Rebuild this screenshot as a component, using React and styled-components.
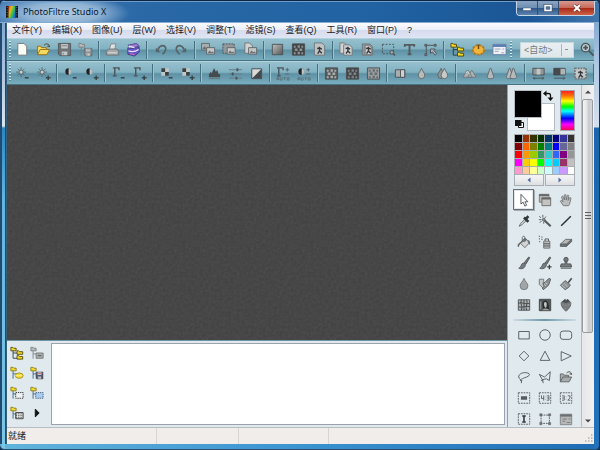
import React from "react";
import styled, { createGlobalStyle, css } from "styled-components";

const uiFont = `"Liberation Sans", "Noto Sans CJK SC", sans-serif`;

const GlobalStyle = createGlobalStyle`
  *, *::before, *::after { box-sizing: border-box; }
  html, body { margin: 0; padding: 0; }
  body { font-family: ${uiFont}; font-size: 9px; color: #1c1c24; background: #16304f; }
  button { font: inherit; color: inherit; padding: 0; margin: 0; border: 0; background: none; }
`;

/* ---------- window ---------- */

const Frame = styled.div`
  height: 100vh;
  min-height: 300px;
  display: flex;
  flex-direction: column;
  overflow: hidden;
  padding: 0 5px 5px 6px;
  border-radius: 6px 6px 5px 5px;
  border-right: 1px solid #12335c;
  border-bottom: 1px solid #2c4f6c;
  background:
    linear-gradient(#6f9cc8, #b4cbe4 70px, #d5e0ee 127px, #1b66ac 128px, #2273bb) right 0 top 0 / 5px 100% no-repeat,
    linear-gradient(#6f9cc8, #a9c3de 70px, #dbe5ef 126px, #2b86c4 128px, #62b5de 200px, #7cc6e6) 2px 0 / 3px 100% no-repeat,
    linear-gradient(90deg, #62b4dc, #3b93d0 50%, #1e6cb4) 0 100% / 100% 5px no-repeat,
    #214a70;
`;

const TitleBar = styled.header`
  flex: 0 0 23px;
  display: flex;
  align-items: flex-start;
  margin: 0 -5px 0 -6px;
  padding: 0 4px 0 6px;
  border-top: 1px solid #0d2644;
  box-shadow: inset 0 1px 0 #6e9cc9, inset 0 -1px 0 #85abd0;
  background:
    radial-gradient(ellipse 68px 18px at 62px 12px, #b0cbe2 0%, #8fb3d4 55%, transparent 100%),
    linear-gradient(90deg, #4f83b8 0, #2a68a6 140px, #2163a3 60%, #1b5696 88%, #4176ab 100%);
`;

const Title = styled.h1`
  margin: 0;
  flex: 1;
  padding: 4px 0 0 5px;
  font: 400 9px/14px "Noto Sans", "Open Sans", sans-serif;
  color: #0b1a2e;
`;

const AppLogo = styled.svg`
  width: 12px;
  height: 12px;
  margin-top: 5px;
`;

const Captions = styled.div`
  display: flex;
  height: 15px;
  border: 1px solid #c9d6e6;
  border-top: 0;
  border-radius: 0 0 4px 4px;
  overflow: hidden;
`;

const CaptionButton = styled.button`
  width: ${(p) => (p.$close ? 35 : 21)}px;
  display: grid;
  place-items: center;
  border-right: 1px solid #35506f;
  background: linear-gradient(#8ba5c3, #6d8db2 48%, #2f5788 52%, #5b84b0);
  ${(p) =>
    p.$close &&
    css`
      border-right: 0;
      background: linear-gradient(#d79a8f, #c76a5a 48%, #a82a18 52%, #cc6247);
    `}
`;

const Client = styled.div`
  flex: 1;
  min-height: 0;
  display: flex;
  flex-direction: column;
  border-left: 1px solid #35617f;
  background: #e0e9ed;
`;

/* ---------- menu ---------- */

const MenuBar = styled.nav`
  flex: 0 0 15px;
  display: flex;
  background: linear-gradient(#fbfcfe, #eceef8 45%, #d6dbee 50%, #e0e5f5);
`;

const MenuItem = styled.button`
  padding: 0 5px;
  line-height: 15px;
  white-space: nowrap;
`;

/* ---------- toolbars ---------- */

const ToolBar = styled.div`
  flex: 0 0 ${(p) => p.$height}px;
  display: flex;
  align-items: center;
  overflow: hidden;
  padding-left: 2px;
  border-top: 1px solid #b3d2dc;
  border-bottom: 1px solid #477384;
  background: linear-gradient(#96c0ce, #82b2c2 46%, #5e91a4 54%, #79aebf);
`;

const Grip = styled.span`
  flex: 0 0 2px;
  height: 18px;
  margin-right: 1px;
  background: repeating-linear-gradient(#d5e8ef 0 1px, #55899d 1px 2px, transparent 2px 3px);
`;

const Divider = styled.span`
  flex: 0 0 6px;
  height: 18px;
  background: linear-gradient(90deg, transparent 2px, #47707f 2px 3px, #9cc3d0 3px 4px, transparent 4px);
`;

const ToolButton = styled.button`
  flex: 0 0 21px;
  height: 20px;
  display: flex;
  align-items: center;
  padding-left: 3px;
`;

const ZoomSelect = styled.select`
  flex: 0 0 54px;
  width: 54px;
  height: 16px;
  margin: 0 3px 0 7px;
  padding: 0 3px;
  appearance: none;
  border: 1px solid #c6d6dd;
  border-radius: 0;
  font: 9px ${uiFont};
  color: #737b80;
  opacity: 1;
  background:
    linear-gradient(#8a8f94, #8a8f94) right 5px center / 3px 1px no-repeat,
    linear-gradient(#aab6bd, #aab6bd) right 11px center / 1px 12px no-repeat,
    linear-gradient(#e9eef1, #dfe7eb);
`;

/* ---------- work area ---------- */

const Body = styled.div`
  flex: 1;
  min-height: 0;
  display: flex;
`;

const Column = styled.div`
  flex: 1;
  min-width: 0;
  display: flex;
  flex-direction: column;
`;

const grain = `url("data:image/svg+xml,%3Csvg xmlns='http://www.w3.org/2000/svg' width='128' height='128'%3E%3Cfilter id='g'%3E%3CfeTurbulence type='fractalNoise' baseFrequency='.35' numOctaves='2' stitchTiles='stitch'/%3E%3CfeColorMatrix type='saturate' values='0'/%3E%3C/filter%3E%3Crect width='128' height='128' filter='url(%23g)' opacity='.1'/%3E%3C/svg%3E")`;

const Canvas = styled.main`
  flex: 1;
  min-height: 0;
  background: ${grain} #404040;
`;

const LayerDock = styled.section`
  flex: 0 0 87px;
  display: flex;
  gap: 4px;
  padding: 2px 2px 2px 0;
  border-top: 1px solid #6d94a3;
  background: #e0e9ed;
`;

const LayerActions = styled.div`
  flex: 0 0 40px;
  display: grid;
  grid-template-columns: 20px 20px;
  grid-auto-rows: 20px;
`;

const SmallButton = styled.button`
  display: grid;
  place-items: center;
`;

const LayerList = styled.div`
  flex: 1;
  border: 1px solid #9aa3ad;
  background: #fff;
`;

/* ---------- side panel ---------- */

const Side = styled.aside`
  flex: 0 0 87px;
  display: flex;
  border-left: 1px solid #86a5b1;
  background: #e0e9ed;
  overflow: hidden;
`;

const SideContent = styled.div`
  flex: 1;
  min-width: 0;
  padding: 5px 6px 0;
  overflow: hidden;
`;

const ColorRow = styled.div`
  display: flex;
  justify-content: space-between;
  height: 41px;
`;

const Swatches = styled.div`
  position: relative;
  width: 42px;
`;

const Swatch = styled.button`
  position: absolute;
  width: 28px;
  height: 28px;
  border: 1px solid #b3bcc2;
  ${(p) => (p.$front ? "left: 0; top: 0; background: #000; z-index: 1;" : "left: 13px; top: 13px; background: #fff;")}
`;

const CornerButton = styled.button`
  position: absolute;
  display: grid;
  ${(p) => (p.$swap ? "left: 29px; top: 0;" : "left: 1px; top: 29px;")}
`;

const Hue = styled.div`
  width: 15px;
  border: 1px solid #a9a5ac;
  background: linear-gradient(#f22, #ff8000 14%, #ff0 26%, #0f0 40%, #0ff 52%, #00f 70%, #f0f 86%, #f05);
`;

const Palette = styled.div`
  display: grid;
  grid-template-columns: repeat(8, 1fr);
  grid-auto-rows: 7px;
  gap: 1px 0;
  padding: 1px 0 0 1px;
  margin-top: 3px;
  background: #a9adb0;
`;

const Cell = styled.button`
  background: ${(p) => p.$color};
  border-right: 1px solid #a9adb0;
`;

const Pager = styled.div`
  display: grid;
  grid-template-columns: 1fr 1fr;
  gap: 1px;
`;

const PagerButton = styled.button`
  height: 12px;
  display: grid;
  place-items: center;
  border: 1px solid #a8b0b6;
  background: linear-gradient(#f4f4f5, #ebecee 50%, #dcdee1);
`;

const ToolGrid = styled.div`
  display: grid;
  grid-template-columns: repeat(3, 21px);
  grid-auto-rows: 21px;
  margin: ${(p) => (p.$tight ? 0 : 3)}px 0 0 -1px;
`;

const GridButton = styled.button`
  display: grid;
  place-items: center;
  border: 1px solid transparent;
  ${(p) =>
    p.$active &&
    css`
      background: #fff;
      border-color: #66707a;
      box-shadow: inset 0 0 0 1px #e3e6e8, 1px 1px 0 #a3abb0;
    `}
`;

const Rule = styled.hr`
  height: 2px;
  margin: 4px -1px 3px;
  border: 0;
  background: linear-gradient(90deg, #d0dde2, #6e98a8 50%, #d0dde2);
`;

const ScrollBar = styled.div`
  flex: 0 0 13px;
  display: flex;
  flex-direction: column;
  background: linear-gradient(90deg, #b8bdc2 0 1px, #e6e6e8 1px, #f1f1f2);
`;

const ScrollArrow = styled.button`
  flex: 0 0 13px;
  display: grid;
  place-items: center;
`;

const Track = styled.div`
  flex: 1;
  min-height: 0;
`;

const Thumb = styled.div`
  height: 74%;
  margin: 1px 1px 0 1px;
  display: grid;
  place-items: center;
  border: 1px solid #979a9e;
  border-radius: 2px;
  background: linear-gradient(90deg, #f6f6f6, #e3e3e5 45%, #c9cbce 60%, #d4d5d8);
`;

const Status = styled.footer`
  flex: 0 0 17px;
  display: flex;
  border-top: 1px solid #b7bdc2;
  line-height: 16px;
  background: #f0edeb;
`;

const StatusCell = styled.div`
  width: ${(p) => p.$width}px;
  padding-left: 1px;
  border-right: 1px solid #d8d6d4;
`;

const StatusRest = styled.div`
  flex: 1;
  display: flex;
  justify-content: flex-end;
  align-items: flex-end;
`;

/* ---------- icons, all drawn on a 16 unit grid ---------- */

const Svg = styled.svg`
  display: block;
  width: ${(p) => p.$size || 16}px;
  height: ${(p) => p.$size || 16}px;
  fill: none;
  stroke: #4d5357;
`;

const Minus = () => <path d="M10.500 12.500h4" stroke="#3c4448" strokeWidth="1.500" />;
const Plus = () => <path d="M10.500 12.500h5M13 10v5" stroke="#3c4448" strokeWidth="1.500" />;
const Sun = () => (
  <>
    <circle cx="6.500" cy="6.500" r="2.300" fill="#c6cdd0" />
    <path d="M6.500 1.500v1.500M6.500 10v1.500M1.500 6.500h1.500M10 6.500h1.500M3 3l1 1M9 9l1 1M3 10l1-1M9 4l1-1" />
  </>
);
const Half = ({ x = 6 }) => (
  <>
    <circle cx={x} cy="6" r="3.200" fill="#b9c6cb" stroke="#8fa3ab" />
    <path d={`M${x} 2.500a3.500 3.500 0 0 0 0 7z`} fill="#222" stroke="none" />
  </>
);
const Gamma = ({ x = 0 }) => (
  <path d={`M${x + 2} 2h6.500v2.500M${x + 4} 2v8.500M${x + 2} 10.500h4`} stroke="#4b5559" strokeWidth="1.500" />
);
const Checks = () => (
  <>
    <path d="M2.500 2.500h8v8h-8z" fill="#c2c8ca" stroke="none" />
    <path d="M2.500 2.500h4v4h4v4h-4v-4h-4z" fill="#3a3f42" stroke="none" />
  </>
);
const Auto = () => (
  <path
    d="M1 15v-2.500h2V15M1 14h2M4.500 12v3h2v-3M8 12.500h2.500M9.300 12.500V15M12 12.500h2V15h-2z"
    stroke="#596a72"
    strokeWidth=".8"
  />
);
const PlusMinus = () => <path d="M10 4h4M12 2v4M10 8.500h4" stroke="#596267" />;
const PhotoBox = ({ x, y, tone = "#c4c6c6" }) => (
  <>
    <path d={`M${x} ${y}h8.500v7h-8.500z`} fill={tone} stroke="#62686b" />
    <path d={`M${x + 1} ${y + 6}l2-3 2 2 1.500-1 1.500 2z`} fill="#6b7072" stroke="none" />
  </>
);
const Film = ({ a, b }) => (
  <>
    <path d="M1.500 2h13v12h-13z" fill={a} stroke="#4c5052" />
    <path d="M3 4h2v2H3zM7 3.500h2.500V6H7zM11 4h2v2h-2zM4 7h3v2.500H4zM9 7h3v2.500H9zM3 11h2v2H3zM7 10.500h2.500V13H7zM11 11h2v2h-2z" fill={b} stroke="none" />
  </>
);
const Page = ({ x = 3, y = 1.5, w = 9.5, h = 12.5, fill = "#d1d3d2" }) => (
  <path d={`M${x} ${y}h${w - 3}l3 3v${h - 3}h-${w}z`} fill={fill} stroke="#70787b" />
);
const Man = ({ x = 0 }) => (
  <path d={`M${x + 8} 5v1M${x + 5.500} 7l2.500-.500 2.500 1M${x + 8} 7v2.500l-2 3M${x + 8} 9.500l2.500 2.500`} stroke="#34383a" strokeWidth="1.500" />
);
const Drop = ({ x = 8, fill = "#b7bbbc" }) => (
  <path d={`M${x} 2.500c-1 3-3.500 5-3.500 7.500a3.500 3.500 0 0 0 7 0c0-2.500-2.500-4.500-3.500-7.500z`} fill={fill} stroke="#60676a" />
);
const Cone = ({ x = 8 }) => (
  <path d={`M${x - .5} 2.500h1l3 9c0 1.500-1.500 2-3.500 2s-3.500-.500-3.500-2z`} fill="#b5b9ba" stroke="#62696c" />
);
const Disk = ({ x = 1, y = 1, s = 1, color = "#6e7376" }) => (
  <g transform={`translate(${x} ${y}) scale(${s})`}>
    <path d="M.500.500h13v13H2l-1.500-1.500z" fill={color} stroke="#565b5e" />
    <path d="M3.500 1h7v5h-7zM4 9h6v4H4z" fill="#c4c8c9" stroke="none" />
    <path d="M4.500 3h5M5.500 10.500v2" stroke="#777" />
  </g>
);
const Tree = ({ gray }) => (
  <>
    <path d="M3.500 5v9.500M3.500 9h4" stroke={gray ? "#7f8486" : "#3c6384"} />
    <path d="M1 1.500h2.500l1 1H7v3H1z" fill={gray ? "#b5b9ba" : "#f5dc24"} stroke={gray ? "#7c8183" : "#8a7a17"} />
  </>
);
const Dashed = ({ fill = "none" }) => (
  <path d="M1.500 2h13v12h-13z" strokeDasharray="2 1" fill={fill} stroke="#50565a" />
);
const Folder = ({ fill = "#f6d95f", line = "#92701a" }) => (
  <>
    <path d="M1.500 13.500V4.500h3.500l1 1.500h5v2.500" fill={fill} stroke={line} />
    <path d="M1.500 13.500l3-5.500h10l-3 5.500z" fill={fill} stroke={line} />
    <path d="M8.500 3.500c2-2 4-2 5.500 0v2M12 4.500h3" stroke="#4f4b39" />
  </>
);
const Brush = () => (
  <>
    <path d="M13.500 1L8 8l2 1.500L14.500 2z" fill="#777" stroke="#4d5154" />
    <path d="M7.500 8c-3 0-2 4.500-5.500 6 3 1.500 7.500 0 7.500-4z" fill="#777c7e" stroke="#54595b" />
  </>
);

const icons = {
  newFile: <Page fill="#fdfdf8" />,
  open: <Folder />,
  save: <Disk />,
  saveTree: (<><Tree gray /><Disk x={6.500} y={6.500} s={0.620} color="#888d8f" /></>),
  print: (<><path d="M4.500 8l2-6h5l-1 6" fill="#e0e2e1" stroke="#83898b" /><path d="M1.500 10l2.500-2.500h9l1.500 2.500v4h-13z" fill="#a5a9aa" stroke="#6d7375" /><path d="M3 11.500h10" stroke="#e1e3e3" /></>),
  scanner: (<><path d="M2 3.500l9-2 3 2.500-7 3z" fill="#9b7bd0" stroke="#514695" /><path d="M2 6c2 1.500 8 1.500 12-1v6l-5 4-7-2z" fill="#6358c8" stroke="#433b8a" /><path d="M2.500 9.500c4 1.500 8 .500 11-1.500M3 4.500l6 1.500" stroke="#f0dcf8" strokeWidth="1.500" /><path d="M4 12.500l5 1" stroke="#e26fa6" /></>),
  undo: (<><path d="M3 6v5h5z" fill="#59646a" stroke="none" /><path d="M5 8.500c2.500-6 7.500-5.500 8.500-2 .500 3-1 4.500-3.500 6.500" stroke="#59646a" strokeWidth="1.800" /></>),
  redo: (<><path d="M13 6v5H8z" fill="#59646a" stroke="none" /><path d="M11 8.500C8.500 2.500 3.500 3 2.500 6.500c-.500 3 1 4.500 3.500 6.500" stroke="#59646a" strokeWidth="1.800" /></>),
  copies: (<><PhotoBox x={0.500} y={1.500} tone="#a8acac" /><PhotoBox x={6} y={6} /></>),
  duplicate: (<><path d="M1 2h12v10H1z" fill="#93999a" strokeDasharray="2 1" /><PhotoBox x={5.500} y={6} /></>),
  pastePhoto: (<><Page x={2} y={1} w={8} h={11} /><PhotoBox x={6} y={6} /></>),
  grayscale: (<><defs><linearGradient id="gs" x2="1" y2="1"><stop stopColor="#bfc1c1" /><stop offset="1" stopColor="#555" /></linearGradient></defs><path d="M2.500 2.500h11v11h-11z" fill="url(#gs)" /></>),
  film: <Film a="#3f4345" b="#8d9293" />,
  manPage: (<><Page x={2.500} y={1} w={11} h={13} fill="#bfc3c3" /><Man /></>),
  manPages: (<><Page x={1} y={1} w={8} h={11} /><Page x={5} y={3} w={9} h={11} /><Man x={1.500} /></>),
  manDark: (<><Page x={2.500} y={2} w={11} h={12} fill="#90979a" /><Page x={5.500} y={3.500} w={7} h={10} /><Man x={1} /></>),
  selectZoom: (<><path d="M1.500 2.500h12v10h-12z" strokeDasharray="2 1.500" /><circle cx="11.500" cy="11" r="2" fill="#9ba3a6" /><path d="M13 12.500l2 2" strokeWidth="1.500" /></>),
  text: <path d="M3 5V3h10v2M8 3v10M6 13h4" stroke="#535b5f" strokeWidth="2" />,
  transform: (<><path d="M3.500 3.500v10M3.500 3.500h10" /><path d="M2 2.500h2v2H2zM12 2.500h2v2h-2zM2 12.500h2v2H2z" fill="#8c989d" /><path d="M8 7.500h5l-1.500 1.500 3 3.500-1.500 1.500-3-3.500L8 12z" fill="#b5b8b8" /></>),
  explorer: (<><path d="M3.500 5v9h5M3.500 8h5" stroke="#2a3b47" /><path d="M1 1.500h2l1 1h3v3H1zM8 5.500h2l1 1h3.500v3H8zM8 11h2l1 1h3.500v3H8z" fill="#f5d820" stroke="#50470f" /></>),
  gear: (<><ellipse cx="8" cy="8.500" rx="6" ry="5" fill="#e2a42b" stroke="#b1781e" strokeWidth="2" strokeDasharray="2.500 1.200" /><ellipse cx="8" cy="8.500" rx="5" ry="4" fill="#f0b53a" stroke="none" /><path d="M8 2.500v5" stroke="#734c12" strokeWidth="1.600" /></>),
  dialog: (<><path d="M1 2.500h14v11H1z" fill="#eef0f5" stroke="#6580a9" /><path d="M1 4h14" stroke="#5a7db5" strokeWidth="2.500" /><path d="M3 7.500h6M3 10h4M11 7.500h2M10 11.500h3" stroke="#98a5b8" /></>),
  zoomIn: (<><circle cx="6" cy="6" r="4.500" fill="#bccbd0" strokeWidth="1.500" /><path d="M3.500 6h5M6 3.500v5M9.500 9.500l5 5" strokeWidth="1.800" /></>),
  sunMinus: (<><Sun /><Minus /></>),
  sunPlus: (<><Sun /><Plus /></>),
  halfMinus: (<><Half /><Minus /></>),
  halfPlus: (<><Half /><Plus /></>),
  gammaMinus: (<><Gamma /><Minus /></>),
  gammaPlus: (<><Gamma /><Plus /></>),
  satMinus: (<><Checks /><Minus /></>),
  satPlus: (<><Checks /><Plus /></>),
  histogram: (<><path d="M2 12V9l2-3 1 2 2.500-6 2 4 1.500-2 1 4 2 1v3z" fill="#454c50" stroke="none" /><path d="M2 13.500h12" stroke="#6b7376" /></>),
  levels: (<><path d="M1 4h14M1 8.500h14M1 13h14" stroke="#667b84" /><path d="M10 2.500v3M5 7v3M9 11.500v3" strokeWidth="2" stroke="#4b5357" /></>),
  negative: (<><path d="M3 3h10.500v10.500H3z" fill="#45494b" /><path d="M3.500 13V3.500H13z" fill="#dadbd9" stroke="none" /></>),
  autoGamma: (<><Gamma x={-1} /><PlusMinus /><Auto /></>),
  autoContrast: (<><Half x={5} /><PlusMinus /><Auto /></>),
  filmA: <Film a="#565a5b" b="#a9adad" />,
  filmB: <Film a="#414547" b="#7d8385" />,
  filmC: <Film a="#999ea0" b="#686e70" />,
  splitBox: (<><path d="M2.500 4h10v8h-10z" fill="#a8adae" /><path d="M8 4h4.500v8H8z" fill="#d0d2d2" /></>),
  drop: <Drop />,
  drops: (<><Drop x={6.500} fill="#8e9496" /><Drop x={10} fill="#c9caca" /></>),
  hills: (<><path d="M1 12l4-7h2l4 7zM6 12l4-7h1l4 7z" fill="#adb2b3" stroke="#737b7e" /><path d="M4 7.500l2-2 2 3" stroke="#d9dbda" /></>),
  cone: <Cone />,
  cones: (<><Cone x={6} /><Cone x={10} /></>),
  gradOut: (<><path d="M2 2.500h12v7H2z" fill="#92989a" stroke="#4b5052" /><path d="M6 3h4v6H6z" fill="#c3c5c5" stroke="none" /><path d="M2 13h12M4 11.500L2.500 13 4 14.500M12 11.500l1.500 1.500-1.500 1.500" /></>),
  gradIn: (<><path d="M2 2.500h12v7H2z" fill="#454a4c" stroke="#43484a" /><path d="M9 3h5v6H9z" fill="#b0b4b5" stroke="none" /><path d="M2 13h12M12 11.500l1.500 1.500-1.500 1.500" /></>),
  frameMan: (<><path d="M2 2.500h12v11H2z" fill="#c4c8c8" stroke="#737a7c" strokeWidth="2" strokeDasharray="2 1" /><Man /></>),
  pointer: <path d="M4.500 1.500v11l2.500-2 2 4.500 2-1-2-4h3.500z" fill="#fff" stroke="#444a50" />,
  windows: (<><path d="M1.500 1.500h11v9h-11z" fill="#b3b5b4" stroke="#777" /><path d="M1.500 2.500h11" stroke="#666" strokeWidth="2" /><path d="M4.500 5.500h10v9h-10z" fill="#c3c4c2" stroke="#666" /><path d="M4.500 6.500h10" stroke="#666" strokeWidth="2" /></>),
  hand: (<><path d="M5 14.500L1.500 9.500c.500-1.500 2-1 3 .500L3 4.500c.500-1.500 1.700-1 2.200.5l1 3L6 2.500c.7-1.300 1.800-1 2 .5l.3 5 1-5c.8-1.200 2-.6 1.700.8l-.6 4.700 1.600-3c1-.8 2 0 1.500 1.300L12 13l-1 1.500z" fill="#bcbebd" stroke="#707476" /></>),
  dropper: (<><path d="M9.500 5.500L4 11l-1.500 3 3-1.500L11 7z" fill="#d6d8d7" stroke="#61676a" /><path d="M8 4l5 5M10 6l3-3.500" stroke="#303639" strokeWidth="3" /></>),
  wand: (<><path d="M7.500 7.500l7 6.500" stroke="#555a5c" strokeWidth="2.500" /><path d="M5.500 1v3M1.500 2.500l2 2M1 6.500h3M2 10l2-2M6.500 9v2M9 3l-1.500 2" /><circle cx="6.500" cy="6.500" r="1.500" fill="#999" /></>),
  line: <path d="M2.500 13.500l11-11" stroke="#33383b" strokeWidth="1.800" />,
  bucket: (<><path d="M3.500 9l5.500-5.500 5.500 5-5.500 6z" fill="#d2d4d3" stroke="#62676a" /><path d="M3.500 9L9 3.500l2 2L3 9.500c-2 .5-2 2-1.500 4z" fill="#777c7e" stroke="#62676a" /><path d="M6 7V2.500c1-1.500 2.500-1.500 3 0V8" stroke="#62676a" /><path d="M12 5.500c3 .5 3.500 3 2.500 6L12.500 9z" fill="#72777a" stroke="none" /></>),
  spray: (<><path d="M6.500 7h7v8h-7z" fill="#b9bbba" stroke="#696e70" /><path d="M8 7V4.500h4V7M6.500 10h7M6.500 12.500h7" /><path d="M1 1.500h1M4 2.500h1M1 4.500h1M4 5h1M1.500 7.500h1" strokeWidth="1.500" /></>),
  eraser: (<><path d="M1.500 10.500l6-5.500h7l-6 5.500z" fill="#b6b8b7" stroke="#5f6467" /><path d="M1.500 10.500h7v2.500h-7zM8.500 13l6-5.500V5l-6 5.500z" fill="#6d7274" stroke="#5f6467" /></>),
  brush: <Brush />,
  brushPlus: (<><Brush /><Plus /></>),
  stamp: (<><circle cx="8" cy="4" r="2.500" fill="#777" /><path d="M7 6h2v3h4.500l1 3.500h-13l1-3.500H7z" fill="#777c7e" /><path d="M2 14h12" /></>),
  water: <path d="M8 1.500c-1 3.500-4.500 5.500-4.500 8.700a4.500 4.300 0 0 0 9 0c0-3.200-3.500-5.200-4.500-8.700z" fill="#a1a5a7" stroke="#74797b" />,
  smudge: (<><path d="M1.500 2.500h5V8l2 2-3 2.500-4-4z" fill="#c3c6c6" stroke="#6b7072" /><path d="M12.500 1.500l2 1-2.500 7-3.500 3-2.500 2-1-2 2-2-1.500-3 2.500-1.500z" fill="#8c9092" stroke="#54595b" /><path d="M7 8.500l2 1.500M8.500 6.500l2 1.500" stroke="#d0d2d2" /></>),
  broom: (<><path d="M14.500 1.500l-4 5" strokeWidth="2" /><path d="M7 4l6 5-2 3-4 2.500-5.500-5z" fill="#8f9496" stroke="#5b6163" /><path d="M3 9l4 4M5.500 7l4 4" stroke="#c5c7c7" /></>),
  mesh: (<><path d="M1.500 2h13v12h-13z" fill="#acb0b0" /><path d="M5 2c-2 4 2 8 0 12M11 2c2 4-2 8 0 12M8 2v12M1.500 6c4-2 8 2 13 0M1.500 10c4 2 8-2 13 0" stroke="#3e4446" /></>),
  portrait: (<><path d="M1.500 1.500h13v13h-13z" fill="#54585a" stroke="#3e4244" /><path d="M5.500 12C4 4 6.500 2.500 9 3c3.500.5 3 6 4 10z" fill="#2c2f31" stroke="none" /><path d="M7 5.500c1-1.500 3-1 3 1.500S9.500 11 8.500 11 6.500 8 7 5.500z" fill="#c2c4c3" stroke="none" /><path d="M5 14c1-2.500 6-2.500 8 0z" fill="#9a9e9f" stroke="none" /><path d="M3 13V4" stroke="#8a8e8f" strokeWidth="1.500" /></>),
  berry: (<><path d="M2.500 5c-.500 4 2 7.500 5.500 10 3.500-2.500 6-6 5.500-10-2-2-9-2-11 0z" fill="#777b7c" stroke="#686d6f" /><path d="M4 4l3-2.500L8 3l2-1.500L12 4 8 5.500z" fill="#4a4f51" stroke="#4a4f51" /><path d="M5 7v1M8 8v1M11 7v1M7 11.500v1" stroke="#999" /></>),
  rect: <path d="M2 4h12v8.500H2z" />,
  ellipse: <circle cx="8" cy="8" r="6" />,
  roundRect: <rect x="1.500" y="3.500" width="13" height="9.500" rx="3" />,
  diamond: <path d="M8 2.500L13.500 8 8 13.500 2.500 8z" />,
  triangle: <path d="M8 2.500l5.500 10.500h-11z" />,
  triangleR: <path d="M2.500 3v10.500L14 8z" />,
  lasso: <path d="M4 11C-1 7 4 3 9 3c6 0 7 3 2 5-3 1-5 2-6 2.500M4 11c2 0 2 2 .500 1.500C2 11 6 11 5 15" />,
  polyLasso: <path d="M5 11L1.500 5l6 3L14 2l-1 10-3.500-2L5 11zM5 11c2 1 0 2-1 1s2-.500 2 3" />,
  openShape: <Folder fill="#a8acac" line="#5c6164" />,
  equal: (<><Dashed /><path d="M4.500 6h7v4h-7z" fill="#555b5e" stroke="none" /></>),
  ratio43: (<><Dashed /><path d="M4 5v3.500h3M6.500 5v6M8.500 6.500v.500M8.500 9.500v.500M10 5.500h2.500v5H10M10 8h2.500" strokeWidth=".9" /></>),
  ratio32: (<><Dashed /><path d="M3.500 5.500H6v5H3.500M3.500 8H6M8 6.500v.500M8 9.500v.500M10 5.500h2.500V8L10 10.500h3" strokeWidth=".9" /></>),
  caret: (<><Dashed /><path d="M8 4.500v7M6 4.500h4M6 11.500h4" stroke="#34393c" strokeWidth="1.800" /></>),
  nodes: (<><path d="M3.500 3.500h9.500v9.500H3.500z" strokeDasharray="2 1" /><path d="M2 2h2.500v2.500H2zM12 2h2.500v2.500H12zM2 12h2.500v2.500H2zM12 12h2.500v2.500H12z" fill="#777" strokeWidth=".5" /></>),
  panel: (<><path d="M1.500 2.500h13v12h-13z" fill="#b5b8b7" stroke="#7b8082" /><path d="M1.500 4h13" strokeWidth="2.500" stroke="#6a6f71" /><path d="M4 8h5M4 10.500h3M11 8h2M9 12h4" stroke="#777" /></>),
  treeGray: (<><Tree gray /><path d="M7 8h8v6H7z" fill="#a8acad" stroke="#777" /><path d="M9 11h4" /></>),
  treeOpen: (<><Tree /><ellipse cx="10.500" cy="11" rx="4.500" ry="3" fill="#f7df36" stroke="#9c891b" /><path d="M6 11h8" stroke="#fff09a" /></>),
  treeSave: (<><Tree /><Disk x={6.500} y={6.500} s={0.620} color="#50566f" /><path d="M8.500 8.500h5" stroke="#d87480" /></>),
  treeDash: (<><Tree /><path d="M6.500 7.500h8.500v6.500H6.500z" fill="#eef2f4" stroke="#222" strokeDasharray="1.500 1" /></>),
  treeBlue: (<><Tree /><path d="M6.500 7.500h8.500v6.500H6.500z" fill="#a9cdee" stroke="#425b7c" strokeDasharray="1.500 1" /></>),
  treeCheck: (<><Tree /><path d="M6.500 7.500h8.500v7H6.500z" fill="#e8e9e8" stroke="#333" /><path d="M7 9h8M7 11h8M7 13h8" stroke="#333" strokeDasharray="1 1" /></>),
  play: <path d="M6 3.500v9L10.500 8z" fill="#111" stroke="#111" />,
};

const Icon = ({ name, size }) => (
  <Svg viewBox="0 0 16 16" $size={size} aria-hidden="true">
    {icons[name]}
  </Svg>
);

/* ---------- data ---------- */

const menus = ["文件(Y)", "编辑(X)", "图像(U)", "层(W)", "选择(V)", "调整(T)", "滤镜(S)", "查看(Q)", "工具(R)", "窗口(P)", "?"];

const mainTools = [
  ["newFile", "open", "save", "saveTree"],
  ["print", "scanner"],
  ["undo", "redo"],
  ["copies", "duplicate", "pastePhoto"],
  ["grayscale", "film", "manPage"],
  ["manPages", "manDark", "selectZoom", "text", "transform"],
  ["explorer", "gear", "dialog"],
];

const filterTools = [
  ["sunMinus", "sunPlus"],
  ["halfMinus", "halfPlus"],
  ["gammaMinus", "gammaPlus"],
  ["satMinus", "satPlus"],
  ["histogram", "levels", "negative"],
  ["autoGamma", "autoContrast"],
  ["filmA", "filmB", "filmC"],
  ["splitBox", "drop", "drops"],
  ["hills", "cone", "cones"],
  ["gradOut", "gradIn", "frameMan"],
  [],
];

const drawTools = ["pointer", "windows", "hand", "dropper", "wand", "line", "bucket", "spray", "eraser", "brush", "brushPlus", "stamp", "water", "smudge", "broom", "mesh", "portrait", "berry"];
const shapeTools = ["rect", "ellipse", "roundRect", "diamond", "triangle", "triangleR", "lasso", "polyLasso", "openShape", "equal", "ratio43", "ratio32", "caret", "nodes", "panel"];
const layerTools = ["explorer", "treeGray", "treeOpen", "treeSave", "treeDash", "treeBlue", "treeCheck", "play"];

const palette = `#000000 #993300 #333300 #003300 #003366 #000080 #333399 #333333
#800000 #ff6600 #808000 #008000 #008080 #0000ff #666699 #808080
#ff0000 #ff9900 #99cc00 #339966 #33cccc #3366ff #800080 #969696
#ff00ff #ffcc00 #ffff00 #00ff00 #00ffff #00ccff #993366 #c0c0c0
#ff99cc #ffcc99 #ffff99 #ccffcc #ccffff #99ccff #cc99ff #ffffff`.split(/\s+/);

const Groups = ({ groups }) =>
  groups.map((group, i) => (
    <React.Fragment key={i}>
      {i > 0 && <Divider />}
      {group.map((name) => (
        <ToolButton key={name} aria-label={name}>
          <Icon name={name} size={15} />
        </ToolButton>
      ))}
    </React.Fragment>
  ));

const Arrow = ({ d, color = "#43484d" }) => (
  <svg width="6" height="6" viewBox="0 0 6 6" aria-hidden="true">
    <path d={d} fill={color} />
  </svg>
);

export default function App() {
  return (
    <>
      <GlobalStyle />
      <Frame>
        <TitleBar>
          <AppLogo viewBox="0 0 12 12" aria-hidden="true">
            <defs>
              <linearGradient id="logo" x2="1" y2=".6">
                <stop stopColor="#e33b1c" />
                <stop offset=".35" stopColor="#f5b21c" />
                <stop offset=".65" stopColor="#3cc640" />
                <stop offset="1" stopColor="#1b6fd0" />
              </linearGradient>
            </defs>
            <path d="M0 0h12v12H0z" fill="#16181c" />
            <path d="M2.500 0h7v12h-7z" fill="url(#logo)" />
            <path d="M1.200 1v11M10.800 1v11" stroke="#64707c" strokeDasharray="1 1.500" />
          </AppLogo>
          <Title>PhotoFiltre Studio X</Title>
          <Captions>
            <CaptionButton aria-label="Minimize">
              <svg width="10" height="8" viewBox="0 0 10 8"><path d="M1 4h8v2.500H1z" fill="#fff" stroke="#42536b" strokeWidth=".5" /></svg>
            </CaptionButton>
            <CaptionButton aria-label="Maximize">
              <svg width="10" height="8" viewBox="0 0 10 8"><path d="M1.500 1h7v6h-7z" fill="none" stroke="#42536b" strokeWidth="2" /><path d="M2 1.500h6v5H2z" fill="#55749c" stroke="#fff" strokeWidth="1.500" /></svg>
            </CaptionButton>
            <CaptionButton $close aria-label="Close">
              <svg width="10" height="8" viewBox="0 0 10 8"><path d="M2 1l6 6M8 1L2 7" stroke="#5b2c2c" strokeWidth="3" /><path d="M2 1l6 6M8 1L2 7" stroke="#fff" strokeWidth="2" /></svg>
            </CaptionButton>
          </Captions>
        </TitleBar>
        <Client>
          <MenuBar>
            {menus.map((m) => (
              <MenuItem key={m}>{m}</MenuItem>
            ))}
          </MenuBar>
          <ToolBar $height={23}>
            <Grip />
            <Groups groups={mainTools} />
            <Grip />
            <ZoomSelect aria-label="Zoom" disabled defaultValue="auto">
              <option value="auto">&lt;自动&gt;</option>
            </ZoomSelect>
            <ToolButton aria-label="zoomIn">
              <Icon name="zoomIn" size={15} />
            </ToolButton>
          </ToolBar>
          <ToolBar $height={24}>
            <Grip />
            <Groups groups={filterTools} />
          </ToolBar>
          <Body>
            <Column>
              <Canvas />
              <LayerDock>
                <LayerActions>
                  {layerTools.map((name) => (
                    <SmallButton key={name} aria-label={name}>
                      <Icon name={name} size={14} />
                    </SmallButton>
                  ))}
                </LayerActions>
                <LayerList />
              </LayerDock>
            </Column>
            <Side>
              <SideContent>
                <ColorRow>
                  <Swatches>
                    <Swatch $front aria-label="Foreground" />
                    <Swatch aria-label="Background" />
                    <CornerButton $swap aria-label="Swap colours">
                      <svg width="11" height="11" viewBox="0 0 11 11">
                        <path d="M2 3.500h3.500q2 0 2 2V8" fill="none" stroke="#111" strokeWidth="1.300" />
                        <path d="M0 3.500L3.500.5v6zM7.500 11L4.500 7.500h6z" fill="#111" />
                      </svg>
                    </CornerButton>
                    <CornerButton aria-label="Default colours">
                      <svg width="10" height="10" viewBox="0 0 10 10">
                        <path d="M3.500 3.500h5v5h-5z" fill="#fff" stroke="#111" />
                        <path d="M0 1h6.500v6H0z" fill="#111" />
                      </svg>
                    </CornerButton>
                  </Swatches>
                  <Hue />
                </ColorRow>
                <Palette>
                  {palette.map((c) => (
                    <Cell key={c} $color={c} aria-label={c} />
                  ))}
                </Palette>
                <Pager>
                  <PagerButton aria-label="Previous palette"><Arrow d="M4.500.5v5L1.500 3z" color="#5569a5" /></PagerButton>
                  <PagerButton aria-label="Next palette"><Arrow d="M1.500.5v5l3-2.500z" color="#5569a5" /></PagerButton>
                </Pager>
                <ToolGrid>
                  {drawTools.map((name, i) => (
                    <GridButton key={name} $active={i === 0} aria-label={name}>
                      <Icon name={name} size={14} />
                    </GridButton>
                  ))}
                </ToolGrid>
                <Rule />
                <ToolGrid $tight>
                  {shapeTools.map((name) => (
                    <GridButton key={name} aria-label={name}>
                      <Icon name={name} size={14} />
                    </GridButton>
                  ))}
                </ToolGrid>
              </SideContent>
              <ScrollBar>
                <ScrollArrow aria-label="Scroll up"><Arrow d="M3 1.500l3 3H0z" /></ScrollArrow>
                <Track>
                  <Thumb>
                    <svg width="6" height="7" viewBox="0 0 6 7"><path d="M0 .5h6M0 3.500h6M0 6.500h6" stroke="#5d6166" /></svg>
                  </Thumb>
                </Track>
                <ScrollArrow aria-label="Scroll down"><Arrow d="M3 4.500l3-3H0z" /></ScrollArrow>
              </ScrollBar>
            </Side>
          </Body>
          <Status>
            <StatusCell $width={150}>就绪</StatusCell>
            <StatusCell $width={82} />
            <StatusCell $width={90} />
            <StatusRest>
              <svg width="10" height="10" viewBox="0 0 10 10"><path d="M7 1h1.500M4 4h1.500M7 4h1.500M1 7h1.500M4 7h1.500M7 7h1.500" stroke="#b5b2b0" strokeWidth="1.500" /></svg>
            </StatusRest>
          </Status>
        </Client>
      </Frame>
    </>
  );
}
